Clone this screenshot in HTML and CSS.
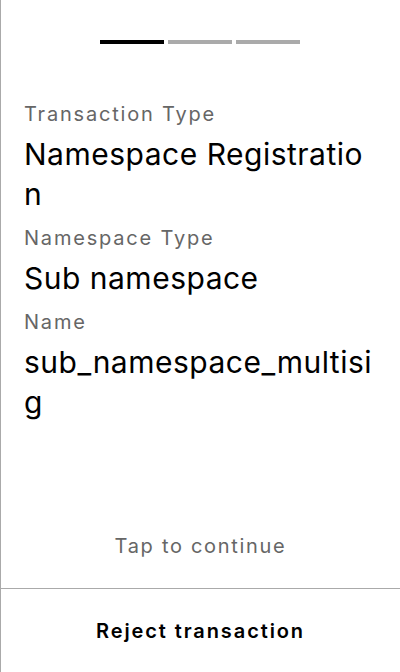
FILE: index.html
```html
<!DOCTYPE html>
<html>
<head>
<meta charset="utf-8">
<link rel="stylesheet" href="styles.css">
</head>
<body>
<div class="screen">
  <div class="progress">
    <span class="bar active"></span>
    <span class="bar"></span>
    <span class="bar"></span>
  </div>
  <div class="fields">
    <div class="field">
      <div class="label">Transaction Type</div>
      <div class="value">Namespace Registration</div>
    </div>
    <div class="field">
      <div class="label">Namespace Type</div>
      <div class="value">Sub namespace</div>
    </div>
    <div class="field">
      <div class="label">Name</div>
      <div class="value">sub_namespace_multisig</div>
    </div>
  </div>
  <div class="hint">Tap to continue</div>
  <div class="footer">
    <div class="reject">Reject transaction</div>
  </div>
</div>
</body>
</html>
```

FILE: styles.css
```css
html, body {
  margin: 0;
  padding: 0;
  background: #fff;
}
body {
  font-family: Inter, "Noto Sans", sans-serif;
  color: #000;
}
.screen {
  height: 672px;
  box-sizing: border-box;
  border-left: 1px solid #aaa;
  display: flex;
  flex-direction: column;
}
.progress {
  display: flex;
  justify-content: center;
  gap: 4px;
  padding-top: 40px;
  margin-left: -1px;
}
.bar {
  width: 64px;
  height: 4px;
  background: #aaa;
}
.bar.active {
  background: #000;
}
.fields {
  padding: 56px 23px 0 23px;
  display: flex;
  flex-direction: column;
  gap: 10px;
}
.label {
  font-size: 20px;
  line-height: 28px;
  color: #666;
  letter-spacing: 1.8px;
}
.value {
  font-size: 30px;
  line-height: 40px;
  letter-spacing: 0.5px;
  word-break: break-all;
  margin-top: 6px;
}
.hint {
  margin-top: auto;
  text-align: center;
  font-size: 20px;
  line-height: 28px;
  color: #666;
  letter-spacing: 1.7px;
  padding-bottom: 28px;
}
.footer {
  border-top: 1px solid #aaa;
  height: 83px;
  display: flex;
  align-items: center;
  justify-content: center;
}
.reject {
  font-size: 20px;
  font-weight: 600;
  line-height: 28px;
  letter-spacing: 1.9px;
}
```
